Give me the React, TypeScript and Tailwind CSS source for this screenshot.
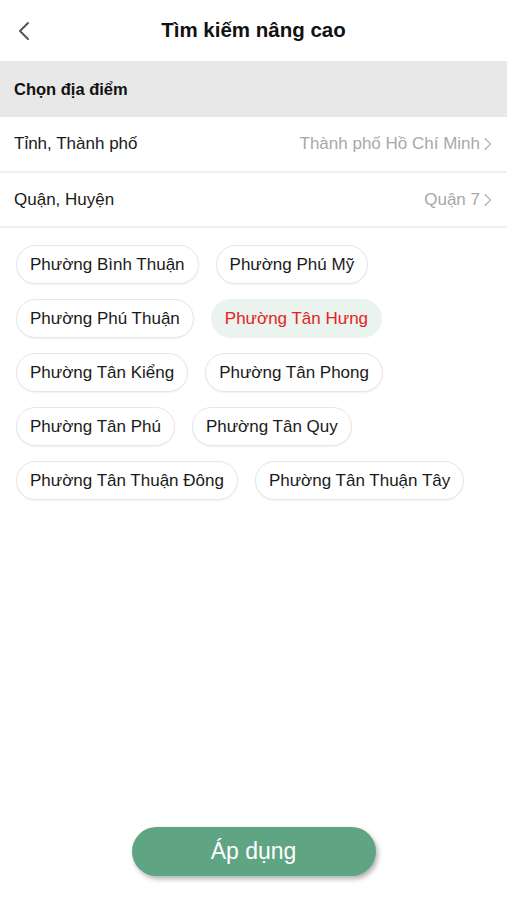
import React from "react";

const wards = [
  "Phường Bình Thuận",
  "Phường Phú Mỹ",
  "Phường Phú Thuận",
  "Phường Tân Hưng",
  "Phường Tân Kiểng",
  "Phường Tân Phong",
  "Phường Tân Phú",
  "Phường Tân Quy",
  "Phường Tân Thuận Đông",
  "Phường Tân Thuận Tây",
];

const rows = [
  [0, 1],
  [2, 3],
  [4, 5],
  [6, 7],
  [8, 9],
];

function Chevron() {
  return (
    <svg width="8" height="14" viewBox="0 0 8 14" fill="none" className="ml-[4px]">
      <path d="M1 1.5 L6.5 7 L1 12.5" stroke="#b5b5b5" strokeWidth="1.3" strokeLinecap="round" strokeLinejoin="round" />
    </svg>
  );
}

export default function App() {
  const selected = "Phường Tân Hưng";
  return (
    <div
      className="w-[507px] h-[900px] bg-white flex flex-col relative"
      style={{ fontFamily: '"Liberation Sans", Arial, sans-serif' }}
    >
      <div className="h-[61px] flex items-center justify-center relative shrink-0">
        <button className="absolute left-[17px] top-[21px]">
          <svg width="14" height="20" viewBox="0 0 14 20" fill="none">
            <path d="M11 2 L3 10 L11 18" stroke="#555" strokeWidth="2" strokeLinecap="round" strokeLinejoin="round" />
          </svg>
        </button>
        <div className="text-[20.5px] font-bold text-[#111]">Tìm kiếm nâng cao</div>
      </div>
      <div className="h-[56px] bg-[#e8e8e8] flex items-center px-[14px] text-[16.5px] font-bold text-[#111]">
        Chọn địa điểm
      </div>
      <div className="h-[56px] flex items-center justify-between pl-[14px] pr-[15px] text-[17px] text-[#1a1a1a] border-b-2 border-[#efefef]">
        <span>Tỉnh, Thành phố</span>
        <span className="flex items-center text-[#a8a8a8]">
          Thành phố Hồ Chí Minh
          <Chevron />
        </span>
      </div>
      <div className="h-[55px] flex items-center justify-between pl-[14px] pr-[15px] text-[17px] text-[#1a1a1a] border-b-2 border-[#efefef]">
        <span>Quận, Huyện</span>
        <span className="flex items-center text-[#a8a8a8]">
          Quận 7
          <Chevron />
        </span>
      </div>
      <div className="flex flex-col gap-[15px] pl-[16px] pt-[17px]">
        {rows.map((r, i) => (
          <div key={i} className="flex gap-[17px]">
            {r.map((idx) => {
              const w = wards[idx];
              const sel = w === selected;
              return (
                <div
                  key={w}
                  className={
                    sel
                      ? "h-[39px] px-[14px] rounded-full flex items-center text-[17px] bg-[#eaf3ee] text-[#e52222]"
                      : "h-[39px] px-[13px] rounded-full flex items-center text-[17px] bg-white text-[#1a1a1a] border border-[#e6e6e6] shadow-[0_1px_2px_rgba(0,0,0,0.06)]"
                  }
                >
                  {w}
                </div>
              );
            })}
          </div>
        ))}
      </div>
      <div className="flex-1" />
      <div className="flex justify-center pb-[24px]">
        <button className="w-[244px] h-[49px] rounded-full bg-[#5fa584] text-white text-[23px] shadow-[2px_3px_5px_rgba(0,0,0,0.3)]">
          Áp dụng
        </button>
      </div>
    </div>
  );
}
